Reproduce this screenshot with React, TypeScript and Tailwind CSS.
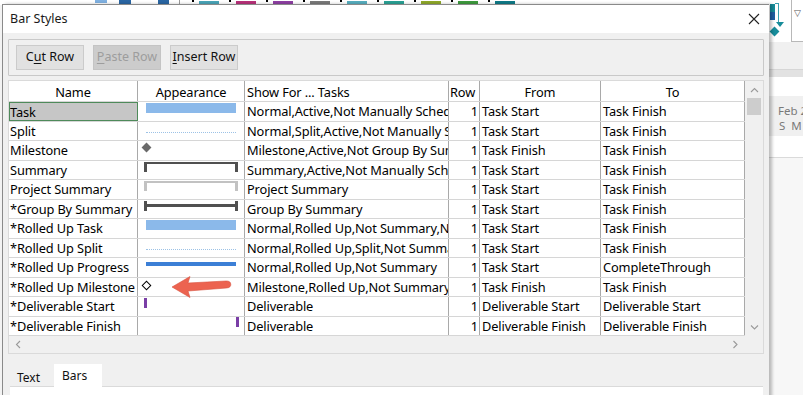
import React from "react";

type Kind =
  | "task"
  | "split"
  | "milestone"
  | "summary"
  | "project"
  | "group"
  | "progress"
  | "hollow"
  | "delStart"
  | "delFinish";

const rows: { name: string; kind: Kind; show: string; from: string; to: string }[] = [
  { name: "Task", kind: "task", show: "Normal,Active,Not Manually Scheduled", from: "Task Start", to: "Task Finish" },
  { name: "Split", kind: "split", show: "Normal,Split,Active,Not Manually Scheduled", from: "Task Start", to: "Task Finish" },
  { name: "Milestone", kind: "milestone", show: "Milestone,Active,Not Group By Summary", from: "Task Finish", to: "Task Finish" },
  { name: "Summary", kind: "summary", show: "Summary,Active,Not Manually Scheduled", from: "Task Start", to: "Task Finish" },
  { name: "Project Summary", kind: "project", show: "Project Summary", from: "Task Start", to: "Task Finish" },
  { name: "*Group By Summary", kind: "group", show: "Group By Summary", from: "Task Start", to: "Task Finish" },
  { name: "*Rolled Up Task", kind: "task", show: "Normal,Rolled Up,Not Summary,Not Manually Scheduled", from: "Task Start", to: "Task Finish" },
  { name: "*Rolled Up Split", kind: "split", show: "Normal,Rolled Up,Split,Not Summary", from: "Task Start", to: "Task Finish" },
  { name: "*Rolled Up Progress", kind: "progress", show: "Normal,Rolled Up,Not Summary", from: "Task Start", to: "CompleteThrough" },
  { name: "*Rolled Up Milestone", kind: "hollow", show: "Milestone,Rolled Up,Not Summary", from: "Task Finish", to: "Task Finish" },
  { name: "*Deliverable Start", kind: "delStart", show: "Deliverable", from: "Deliverable Start", to: "Deliverable Start" },
  { name: "*Deliverable Finish", kind: "delFinish", show: "Deliverable", from: "Deliverable Finish", to: "Deliverable Finish" },
];

function Appearance({ kind }: { kind: Kind }) {
  switch (kind) {
    case "task":
      return <div className="mx-[8px] mt-[1px] h-[10px] bg-[#8bb9ea]" />;
    case "split":
      return <div className="mx-[8px] mt-[10px] h-0 border-t border-dotted border-[#9cc2e6]" />;
    case "milestone":
      return <div className="ml-[4.5px] mt-[3px] w-[7px] h-[7px] rotate-45 bg-[#6a6a6a]" />;
    case "hollow":
      return <div className="ml-[4.5px] mt-[4px] w-[7px] h-[7px] rotate-45 border border-black bg-white" />;
    case "summary":
      return <div className="mx-[6px] mt-[1px] h-[10px] border-t-2 border-x-[3px] border-[#505050]" />;
    case "project":
      return <div className="mx-[6px] mt-[1px] h-[10px] border-t-2 border-x-[3px] border-[#c2c2c2]" />;
    case "group":
      return (
        <div className="mx-[6px] mt-[1px] h-[10px] border-x-[3px] border-[#505050] flex items-center">
          <div className="w-full h-[3px] bg-[#505050]" />
        </div>
      );
    case "progress":
      return <div className="mx-[8px] mt-[4px] h-[4px] bg-[#3c7fd6]" />;
    case "delStart":
      return <div className="ml-[6px] mt-[1px] w-[3px] h-[10px] bg-[#7a3ea6]" />;
    case "delFinish":
      return <div className="ml-[98px] mt-[0px] w-[3px] h-[10px] bg-[#7a3ea6]" />;
  }
}

function RedArrow() {
  return (
    <svg className="absolute left-[33px] top-[-5px] pointer-events-none" width="62" height="26" viewBox="0 0 62 26">
      <path
        d="M1 14 L19 3.5 L17 10 L55 8 Q59.5 7.8 59.8 11.2 Q60 14.6 55.5 15 L17 18 L19 24.5 Z"
        fill="#ec6350"
        stroke="#d9523f"
        strokeWidth="0.6"
        strokeLinejoin="round"
      />
    </svg>
  );
}

function Chevron({ dir }: { dir: "up" | "down" | "left" | "right" }) {
  const d =
    dir === "up"
      ? "M1 5 L4.5 1.5 L8 5"
      : dir === "down"
      ? "M1 1.5 L4.5 5 L8 1.5"
      : dir === "left"
      ? "M5 1 L1.5 4.5 L5 8"
      : "M1.5 1 L5 4.5 L1.5 8";
  const w = dir === "up" || dir === "down" ? 9 : 7;
  const h = dir === "up" || dir === "down" ? 7 : 9;
  return (
    <svg width={w} height={h} viewBox={`0 0 ${w} ${h}`}>
      <path d={d} fill="none" stroke="#9a9a9a" strokeWidth="1.1" />
    </svg>
  );
}

function GanttBackdrop() {
  const segs = [
    "#4aa5b8",
    "#b8317a",
    "#8e3fa3",
    "#7a7a7a",
    "#57aebf",
    "#2aa094",
    "#8fa82a",
    "#3d9a3d",
    "#0f7a87",
  ];
  return (
    <div className="absolute inset-0 bg-[#f3f3f3]">
      {/* top strip of the chart peeking above the dialog */}
      <div className="h-[5px] bg-white flex items-start">
        <div className="w-[95px]" />
        <div className="w-[12px] h-[3px] bg-[#7fb0e0]" />
        <div className="w-[12px]" />
        <div className="w-[12px] h-[4px] bg-[#2a66a3]" />
        <div className="w-[27px]" />
        <div className="w-[11px] h-[4px] bg-[#2a66a3]" />
        <div className="w-[10px]" />
        <div className="w-[1px] h-[5px] bg-[#9a9a9a]" />
        <div className="w-[12px]" />
        {segs.map((c, i) => (
          <div key={i} className="flex items-start">
            <div className="w-[2px] h-[2px] bg-black" />
            <div className="w-[5px]" />
            <div className="w-[20px] h-[3px] mt-[1px]" style={{ backgroundColor: c }} />
            <div className="w-[10px]" />
          </div>
        ))}
      </div>
      {/* right side of the chart */}
      <div className="absolute left-[769px] top-0 w-[34px] h-full flex flex-col">
        <div className="h-[42px] bg-white flex">
          <div className="w-[22px] relative">
            <div className="absolute left-[1px] top-[4px] w-[5px] h-[8px] bg-[#168c9a]" />
            <div className="absolute left-[1px] top-[12px] w-[5px] h-[8px] bg-[#1f5ea3]" />
            <div className="absolute left-[6px] top-[3px] w-[4px] h-[20px] border-r border-t border-[#3aa0b0]" />
            <div className="absolute left-[7px] top-[22px] w-0 h-0 border-l-[4px] border-r-[4px] border-t-[5px] border-l-transparent border-r-transparent border-t-[#168c9a]" />
            <div className="absolute left-[2px] top-[28px] w-[7px] h-[7px] rotate-45 bg-[#168c9a]" />
          </div>
          <div className="flex-1 border-l border-b border-[#b8b8b8] flex justify-center pt-[6px] text-[9px] text-[#555]">▽</div>
        </div>
        <div className="h-[27px] bg-[#f0f0f0]" />
        <div className="h-[8px] bg-[#e2e2e2] border-t border-[#d6d6d6]" />
        <div className="h-[19px] bg-white" />
        <div className="h-[40px] bg-[#f0f0f0] pl-[9px] pt-[7px] text-[11.5px] leading-[15px] text-[#7a7a7a] whitespace-nowrap">
          <div>Feb 2</div>
          <div className="flex gap-[6px] pl-[1px]">
            <span>S</span>
            <span>M</span>
          </div>
        </div>
        <div className="h-[22px] bg-white border-b border-[#dadada]" />
        <div className="flex-1 bg-[#f7f7f7]" />
      </div>
    </div>
  );
}

export default function App() {
  return (
    <div className="relative w-[803px] h-[395px] overflow-hidden font-['Noto_Sans',sans-serif] text-black">
      <GanttBackdrop />

      {/* Dialog */}
      <div className="absolute left-[2px] top-[4px] w-[767px] h-[400px] bg-[#f0f0f0] border-l border-t border-[#8a8a8a] shadow-[3px_0_3px_rgba(0,0,0,0.25)] flex flex-col">
        <div className="h-[28px] bg-white flex items-center justify-between pl-[7px] pr-[9px] shrink-0">
          <span className="text-[12.5px] text-[#1a1a1a]">Bar Styles</span>
          <svg width="12" height="12" viewBox="0 0 12 12">
            <path d="M1 1 L11 11 M11 1 L1 11" stroke="#222" strokeWidth="1.1" />
          </svg>
        </div>

        <div className="flex flex-col px-[5px] pt-[6px]">
          {/* toolbar group */}
          <div className="h-[37px] w-[756px] border border-[#c9c9c9] rounded-[1px] flex items-center gap-[9px] px-[7px]">
            <button className="w-[68px] h-[25px] bg-[#e1e1e1] border border-[#cbcbcb] text-[12.5px] text-[#111]">
              C<span className="underline underline-offset-2">u</span>t Row
            </button>
            <button className="w-[68px] h-[25px] bg-[#cccccc] border border-[#c4c4c4] text-[12.5px] text-[#9d9d9d]">
              <span className="underline underline-offset-2">P</span>aste Row
            </button>
            <button className="w-[68px] h-[25px] bg-[#e1e1e1] border border-[#cbcbcb] text-[12.5px] text-[#111]">
              <span className="underline underline-offset-2">I</span>nsert Row
            </button>
          </div>

          {/* grid */}
          <div className="mt-[4px] w-[756px] border border-[#dadada] bg-[#f0f0f0] flex flex-col text-[12.8px] tracking-[-0.12px]">
            <div className="flex">
              <div className="flex flex-col w-[736px]">
                {/* header */}
                <div className="flex h-[21px] bg-white border-b border-[#d6d6d6] leading-[23px]">
                  <div className="w-[129px] text-center border-r border-[#a9a9a9]">Name</div>
                  <div className="w-[107px] text-center border-r border-[#a9a9a9]">Appearance</div>
                  <div className="w-[204px] pl-[2px] border-r border-[#a9a9a9]">Show For ... Tasks</div>
                  <div className="w-[31px] pl-[1px] border-r border-[#a9a9a9]">Row</div>
                  <div className="w-[121px] text-center border-r border-[#a9a9a9]">From</div>
                  <div className="w-[144px] text-center border-r border-[#a9a9a9]">To</div>
                </div>
                {rows.map((r, i) => (
                  <div key={i} className="flex h-[19.5px] bg-white border-b border-[#d6d6d6] leading-[19px] whitespace-nowrap">
                    <div
                      className={
                        i === 0
                          ? "w-[129px] pl-[0px] bg-[#c6c6c6] border border-[#4e8a5a] overflow-hidden"
                          : "w-[129px] pl-[1px] border-r border-[#a9a9a9] overflow-hidden"
                      }
                    >
                      {r.name}
                    </div>
                    <div className="relative w-[107px] border-r border-[#a9a9a9]">
                      <Appearance kind={r.kind} />
                      {r.kind === "hollow" && <RedArrow />}
                    </div>
                    <div className="w-[204px] pl-[2px] border-r border-[#a9a9a9] overflow-hidden">{r.show}</div>
                    <div className="w-[31px] pr-[1px] text-right border-r border-[#a9a9a9] overflow-hidden">1</div>
                    <div className="w-[121px] pl-[2px] border-r border-[#a9a9a9] overflow-hidden">{r.from}</div>
                    <div className="w-[144px] pl-[2px] border-r border-[#a9a9a9] overflow-hidden">{r.to}</div>
                  </div>
                ))}
              </div>
              {/* vertical scrollbar */}
              <div className="w-[18px] bg-[#f0f0f0] flex flex-col items-center">
                <div className="h-[17px] flex items-center justify-center pt-[1px]">
                  <Chevron dir="up" />
                </div>
                <div className="w-[14px] h-[17px] bg-[#cdcdcd]" />
                <div className="flex-1" />
                <div className="h-[17px] flex items-center justify-center">
                  <Chevron dir="down" />
                </div>
              </div>
            </div>
            {/* horizontal scrollbar */}
            <div className="h-[17px] flex items-center justify-between pl-[6px] pr-[24px]">
              <Chevron dir="left" />
              <Chevron dir="right" />
            </div>
          </div>

          {/* tabs */}
          <div className="mt-[10px] ml-[2px] flex items-end h-[23px] w-[753px] border-b border-[#dadada]">
            <div className="w-[44px] h-[19px] pl-[7px] text-[12px] leading-[22px] text-[#111]">Text</div>
            <div className="w-[48px] h-[23px] bg-white pl-[8px] pt-[2px] text-[12px] leading-[20px] text-[#111] -mb-[1px]">Bars</div>
          </div>
          <div className="ml-[2px] w-[753px] h-[20px] bg-white" />
        </div>
      </div>
    </div>
  );
}
